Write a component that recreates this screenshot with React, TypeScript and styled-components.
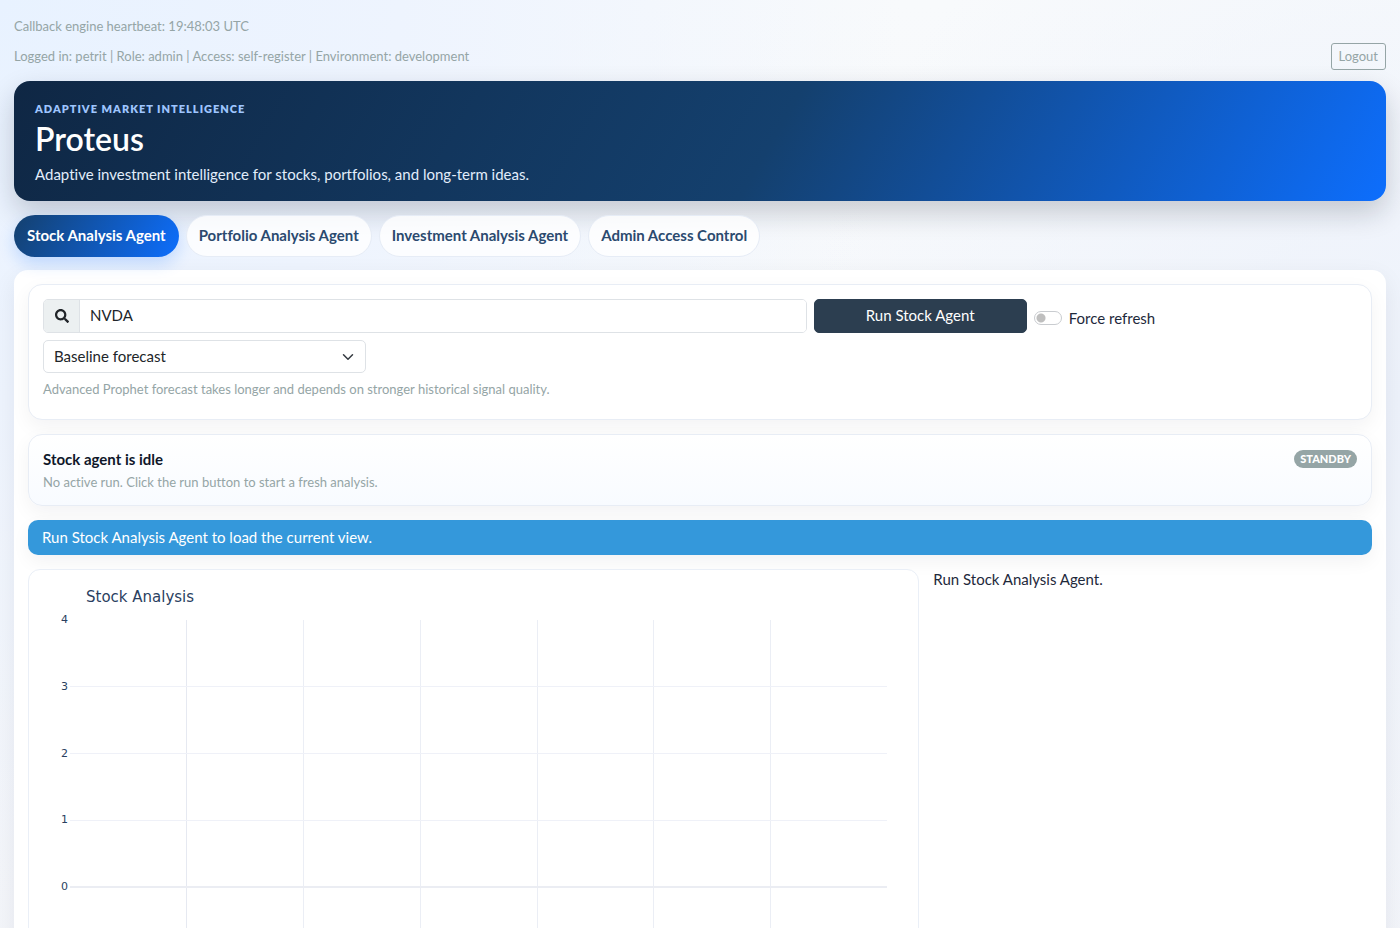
import React, { useState } from "react";
import styled, { createGlobalStyle } from "styled-components";
import { FaSearch } from "react-icons/fa";

const GlobalStyle = createGlobalStyle`
  *, *::before, *::after { box-sizing: border-box; }
  html { background: #f4f6fb; }
  body {
    margin: 0;
    overflow-x: hidden;
    font-family: "Avenir Next", Lato, "Open Sans", sans-serif;
    font-size: 15px;
    line-height: 22px;
    font-variant-ligatures: none;
    color: #1e293b;
    background:
      radial-gradient(circle at top left, #e8f2ff 0, #eef4fe 400px, rgba(240, 245, 254, 0) 900px),
      radial-gradient(circle at right 400px, #edf2fb 0, rgba(240, 244, 251, 0) 600px),
      linear-gradient(180deg, #f8fafc 0%, #f3f5fa 100%);
  }
  button, input, select { font: inherit; color: inherit; margin: 0; }
  h1, h2, p { margin: 0; }
`;

const Page = styled.div`
  padding: 17px 14px 0;
`;

const Small = styled.p`
  padding-bottom: 2px;
  font-size: 13px;
  line-height: 18px;
  color: #95a5a6;
`;

const SessionBar = styled.div`
  display: flex;
  align-items: center;
  justify-content: space-between;
  margin: 6px 0 11px;
`;

const LogoutButton = styled.button`
  height: 27px;
  padding: 0 7px 2px;
  font-size: 13px;
  line-height: 18px;
  color: #95a5a6;
  background: transparent;
  border: 1px solid #95a5a6;
  border-radius: 3px;
`;

const Hero = styled.header`
  padding: 19px 21px 15px;
  color: #ffffff;
  border-radius: 16px;
  background: linear-gradient(120deg, #0f2744 0%, #14406e 55%, #0d6efd 100%);
  box-shadow: 0 12px 28px rgba(15, 23, 42, 0.2);
`;

const Kicker = styled.p`
  font-size: 11px;
  line-height: 18px;
  font-weight: 800;
  letter-spacing: 1px;
  text-transform: uppercase;
  color: #9ec5fe;
`;

const Title = styled.h1`
  padding-bottom: 2px;
  font-size: 32px;
  line-height: 42px;
  font-weight: 600;
`;

const Tagline = styled.p`
  line-height: 24px;
  color: #e2edfb;
`;

const Tabs = styled.nav`
  display: flex;
  flex-wrap: wrap;
  gap: 7px;
  margin: 14px 0 13px;
`;

const Tab = styled.button<{ $active?: boolean }>`
  height: 42px;
  padding: 0 12px 2px;
  font-weight: 700;
  color: ${(p) => (p.$active ? "#ffffff" : "#2b4a6f")};
  background: ${(p) =>
    p.$active ? "linear-gradient(120deg, #14406e, #0d6efd)" : "rgba(255, 255, 255, 0.8)"};
  border: 1px solid ${(p) => (p.$active ? "transparent" : "#e6ecf6")};
  background-origin: border-box;
  border-radius: 21px;
  box-shadow: ${(p) => (p.$active ? "0 7px 16px rgba(13, 110, 253, 0.2)" : "none")};
`;

const Panel = styled.main`
  display: flex;
  flex-direction: column;
  gap: 14px;
  padding: 14px;
  background: #ffffff;
  border-radius: 14px 14px 0 0;
  box-shadow: 0 8px 24px rgba(15, 23, 42, 0.07);
`;

const Card = styled.section<{ $tinted?: boolean }>`
  padding: ${(p) => (p.$tinted ? "14px 14px 12px" : "14px")};
  border: 1px solid #e8edf5;
  border-radius: 14px;
  background: ${(p) => (p.$tinted ? "linear-gradient(180deg, #ffffff, #f8fbff)" : "#ffffff")};
  box-shadow: 0 7px 20px rgba(15, 23, 42, 0.05);
`;

const ControlGrid = styled.form`
  display: grid;
  grid-template-columns: repeat(12, minmax(0, 1fr));
  gap: 7px;
  padding-bottom: 5px;
`;

const TickerGroup = styled.label`
  grid-column: span 7;
  display: flex;
  height: 34px;
  border: 1px solid #dee2e6;
  border-radius: 5px;
  overflow: hidden;
`;

const TickerIcon = styled.span`
  display: flex;
  align-items: center;
  justify-content: center;
  width: 36px;
  font-size: 14px;
  color: #212529;
  background: #ecf0f1;
  border-right: 1px solid #dee2e6;
`;

const TickerInput = styled.input`
  flex: 1;
  min-width: 0;
  padding: 0 10px 2px;
  color: #212529;
  background: #ffffff;
  border: 0;
  outline: 0;
`;

const RunButton = styled.button`
  grid-column: span 2;
  height: 34px;
  padding: 0 10px 2px;
  color: #ffffff;
  background: #2c3e50;
  border: 1px solid #2c3e50;
  border-radius: 5px;
`;

const SwitchLabel = styled.label`
  grid-column: span 3;
  display: flex;
  align-items: center;
  gap: 7px;
  padding-top: 4px;
`;

const Switch = styled.input`
  appearance: none;
  width: 28px;
  height: 14px;
  border: 1px solid #c9ccd0;
  border-radius: 7px;
  background: radial-gradient(circle at 6px 6px, #bfbfbf 0, #bfbfbf 4px, #ffffff 5px);
  &:checked {
    border-color: #2c3e50;
    background: radial-gradient(circle at 20px 6px, #ffffff 0, #ffffff 4px, #2c3e50 5px);
  }
`;

const SelectBox = styled.div`
  grid-column: span 3;
  display: grid;
  align-items: center;
  height: 33px;
  & > * { grid-area: 1 / 1; }
`;

const Select = styled.select`
  appearance: none;
  width: 100%;
  height: 33px;
  padding: 0 32px 2px 10px;
  color: #212529;
  background: #ffffff;
  border: 1px solid #dee2e6;
  border-radius: 5px;
`;

const Chevron = styled.svg`
  justify-self: end;
  margin-right: 12px;
  pointer-events: none;
`;

const HelpText = styled(Small)`
  grid-column: 1 / -1;
`;

const StatusHead = styled.div`
  display: flex;
  align-items: flex-start;
  justify-content: space-between;
`;

const StatusTitle = styled.h2`
  padding-bottom: 4px;
  font-size: 15px;
  line-height: 20px;
  font-weight: 700;
  color: #0f172a;
`;

const Badge = styled.span`
  margin-top: 1px;
  padding: 0 6px;
  font-size: 11px;
  line-height: 18px;
  font-weight: 900;
  color: #ffffff;
  background: #95a5a6;
  border-radius: 9px;
`;

const Alert = styled.div`
  padding: 6px 14px 7px;
  color: #ffffff;
  background: #3498db;
  border-radius: 10px;
  box-shadow: 0 7px 18px rgba(15, 23, 42, 0.05);
`;

const Results = styled.div`
  display: grid;
  grid-template-columns: repeat(12, minmax(0, 1fr));
  gap: 14px;
`;

const ChartCard = styled.figure`
  grid-column: span 8;
  margin: 0;
  padding: 15px 31px 80px 28px;
  border: 1px solid #eaeff7;
  border-radius: 12px;
  background: #ffffff;
`;

const ChartTitle = styled.figcaption`
  padding-left: 29px;
  font-family: Verdana, "DejaVu Sans", sans-serif;
  font-size: 15px;
  line-height: 24px;
  color: #2a3f5f;
`;

const ChartBody = styled.div`
  display: flex;
  align-items: flex-start;
  gap: 2px;
  margin-top: 5px;
`;

const YAxis = styled.div`
  display: flex;
  flex-direction: column;
  align-items: flex-end;
  justify-content: space-between;
  width: 11px;
  height: 279px;
  font-family: Verdana, "DejaVu Sans", sans-serif;
  font-size: 11px;
  line-height: 12px;
  color: #2a3f5f;
`;

const Plot = styled.svg`
  flex: 1;
  min-width: 0;
  height: 334px;
  margin-top: 6px;
`;

const Summary = styled.aside`
  grid-column: span 4;
  line-height: 20px;
`;

const TABS = [
  "Stock Analysis Agent",
  "Portfolio Analysis Agent",
  "Investment Analysis Agent",
  "Admin Access Control",
];

const Y_TICKS = [4, 3, 2, 1, 0];

function EmptyChart() {
  return (
    <ChartCard>
      <ChartTitle>Stock Analysis</ChartTitle>
      <ChartBody>
        <YAxis>
          {Y_TICKS.map((tick) => (
            <span key={tick}>{tick}</span>
          ))}
        </YAxis>
        <Plot aria-hidden="true" shapeRendering="crispEdges">
          {[1, 2, 3, 4, 5, 6].map((i) => (
            <line
              key={`x${i}`}
              x1={`${(i * 100) / 7}%`}
              x2={`${(i * 100) / 7}%`}
              y1="0"
              y2="100%"
              stroke={i === 1 ? "#e6e9f1" : "#ebeef5"}
            />
          ))}
          {[1, 2, 3, 4].map((i) => (
            <line
              key={`y${i}`}
              x1="0"
              x2="100%"
              y1={`${i * 20}%`}
              y2={`${i * 20}%`}
              stroke={i === 4 ? "#ebedf3" : "#eff1f8"}
              strokeWidth={i === 4 ? 2 : 1}
            />
          ))}
        </Plot>
      </ChartBody>
    </ChartCard>
  );
}

export default function App() {
  const [activeTab, setActiveTab] = useState(0);
  const [ticker, setTicker] = useState("NVDA");

  return (
    <Page>
      <GlobalStyle />
      <Small>Callback engine heartbeat: 19:48:03 UTC</Small>
      <SessionBar>
        <Small>
          Logged in: petrit | Role: admin | Access: self-register | Environment: development
        </Small>
        <LogoutButton type="button">Logout</LogoutButton>
      </SessionBar>

      <Hero>
        <Kicker>Adaptive Market Intelligence</Kicker>
        <Title>Proteus</Title>
        <Tagline>Adaptive investment intelligence for stocks, portfolios, and long-term ideas.</Tagline>
      </Hero>

      <Tabs>
        {TABS.map((label, i) => (
          <Tab key={label} type="button" $active={i === activeTab} onClick={() => setActiveTab(i)}>
            {label}
          </Tab>
        ))}
      </Tabs>

      <Panel>
        <Card>
          <ControlGrid onSubmit={(e) => e.preventDefault()}>
            <TickerGroup>
              <TickerIcon>
                <FaSearch />
              </TickerIcon>
              <TickerInput
                type="text"
                aria-label="Ticker"
                value={ticker}
                onChange={(e) => setTicker(e.target.value)}
              />
            </TickerGroup>
            <RunButton type="submit">Run Stock Agent</RunButton>
            <SwitchLabel>
              <Switch type="checkbox" role="switch" />
              Force refresh
            </SwitchLabel>
            <SelectBox>
              <Select aria-label="Forecast mode" defaultValue="baseline">
                <option value="baseline">Baseline forecast</option>
                <option value="prophet">Advanced Prophet forecast</option>
              </Select>
              <Chevron width="12" height="12" viewBox="0 0 16 16" aria-hidden="true">
                <path
                  d="m2 5 6 6 6-6"
                  fill="none"
                  stroke="#343a40"
                  strokeWidth="2"
                  strokeLinecap="round"
                  strokeLinejoin="round"
                />
              </Chevron>
            </SelectBox>
            <HelpText>
              Advanced Prophet forecast takes longer and depends on stronger historical signal quality.
            </HelpText>
          </ControlGrid>
        </Card>

        <Card $tinted>
          <StatusHead>
            <StatusTitle>Stock agent is idle</StatusTitle>
            <Badge>STANDBY</Badge>
          </StatusHead>
          <Small>No active run. Click the run button to start a fresh analysis.</Small>
        </Card>

        <Alert role="status">Run Stock Analysis Agent to load the current view.</Alert>

        <Results>
          <EmptyChart />
          <Summary>Run Stock Analysis Agent.</Summary>
        </Results>
      </Panel>
    </Page>
  );
}
